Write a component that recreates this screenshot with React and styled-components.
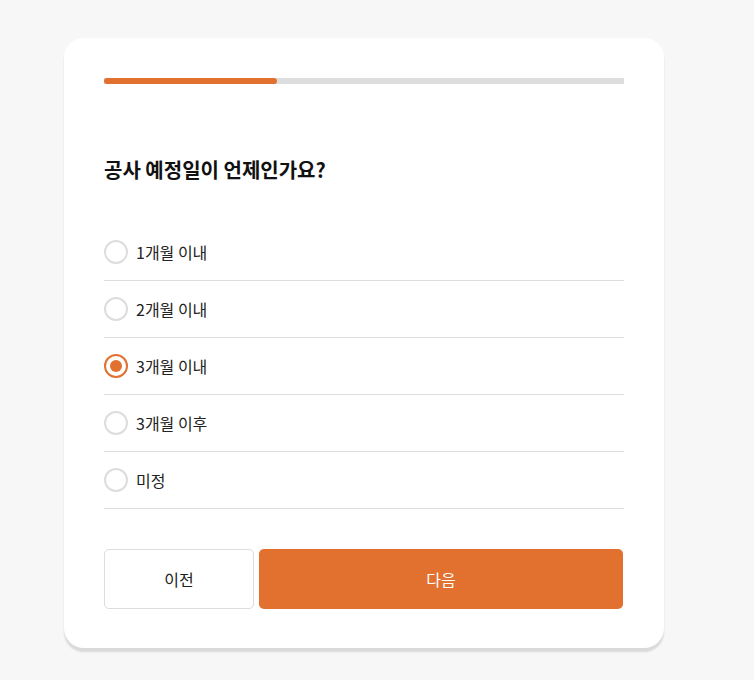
import styled, { createGlobalStyle } from "styled-components";

const GlobalStyle = createGlobalStyle`
  body {
    margin: 0;
    background: #f7f7f7;
    font-family: "Noto Sans CJK KR", "Noto Sans", sans-serif;
    color: #222;
  }
`;

const Page = styled.div`
  min-height: 680px;
  padding: 38px 0 0 64px;
  box-sizing: border-box;
`;

const Card = styled.div`
  width: 600px;
  box-sizing: border-box;
  padding: 40px 40px 39px;
  background: #fff;
  border-radius: 20px;
  box-shadow: 0 4px 2px rgba(0, 0, 0, 0.12);
`;

const Track = styled.div`
  height: 6px;
  background: #dddddd;
`;

const Fill = styled.div`
  height: 100%;
  background: #e2702f;
  border-radius: 3px;
`;

const Title = styled.h2`
  margin: 72px 0 40px;
  font-size: 20px;
  font-weight: 700;
  line-height: 28px;
  color: #111;
`;

const OptionList = styled.div`
  display: flex;
  flex-direction: column;
`;

const Option = styled.label`
  display: flex;
  align-items: center;
  gap: 8px;
  height: 56px;
  border-bottom: 1px solid #dddddd;
  font-size: 16px;
  color: #222;
  cursor: pointer;
`;

const Radio = styled.span`
  width: 24px;
  height: 24px;
  box-sizing: border-box;
  border-radius: 50%;
  border: 2px solid ${(p) => (p.$checked ? "#e2702f" : "#dddddd")};
  display: flex;
  align-items: center;
  justify-content: center;
  &::after {
    content: "";
    width: 12px;
    height: 12px;
    border-radius: 50%;
    background: ${(p) => (p.$checked ? "#e2702f" : "transparent")};
  }
`;

const Buttons = styled.div`
  display: flex;
  gap: 5px;
  margin-top: 40px;
`;

const Button = styled.button`
  height: 60px;
  border-radius: 5px;
  font-family: inherit;
  font-size: 16px;
  cursor: pointer;
`;

const PrevButton = styled(Button)`
  width: 150px;
  background: #fff;
  border: 1px solid #dddddd;
  color: #222;
`;

const NextButton = styled(Button)`
  flex: 1;
  margin-right: 1px;
  background: #e2702f;
  border: none;
  color: #fff;
`;

const options = ["1개월 이내", "2개월 이내", "3개월 이내", "3개월 이후", "미정"];

export default function App() {
  const selected = 2;
  return (
    <Page>
      <GlobalStyle />
      <Card>
        <Track>
          <Fill style={{ width: "33.3%" }} />
        </Track>
        <Title>공사 예정일이 언제인가요?</Title>
        <OptionList>
          {options.map((text, idx) => (
            <Option key={idx}>
              <Radio $checked={idx === selected} />
              {text}
            </Option>
          ))}
        </OptionList>
        <Buttons>
          <PrevButton>이전</PrevButton>
          <NextButton>다음</NextButton>
        </Buttons>
      </Card>
    </Page>
  );
}
